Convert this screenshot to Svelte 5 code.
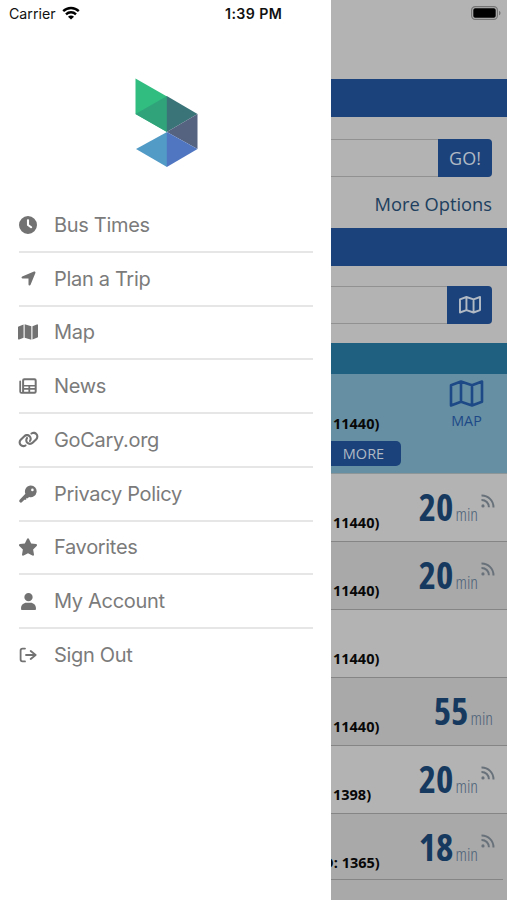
<script lang="ts">
	type MenuItem = { label: string; icon: string; box: string; width: number; height: number };

	const menu: MenuItem[] = [
		{
			label: 'Bus Times',
			box: '0 0 512 512',
			width: 18,
			height: 18,
			icon: 'M256 0a256 256 0 1 1 0 512A256 256 0 1 1 256 0zM226 120V256c0 8 4 17 12 23l96 66c14 9 30 5 38-8s5-29-8-38L286 243.2V120c0-16-13-28-30-28s-30 12-30 28z'
		},
		{
			label: 'Plan a Trip',
			box: '0 32 448 448',
			width: 15,
			height: 15,
			icon: 'M429.6 92.1c4.9-11.9 2.1-25.6-7-34.7s-22.8-11.9-34.7-7l-352 144c-14.2 5.8-22.2 20.8-19.3 35.8s16.1 25.8 31.4 25.8H224V432c0 15.3 10.8 28.4 25.8 31.4s30-5.1 35.8-19.3l144-352z'
		},
		{
			label: 'Map',
			box: '0 0 576 512',
			width: 20,
			height: 18,
			icon: 'M384 476.1L192 421.2V35.9L384 90.8V476.1zm32-1.2V88.4L543.1 37.5c15.8-6.3 32.9 5.3 32.9 22.3V394.6c0 9.8-6 18.6-15.1 22.3L416 474.8zM15.1 95.1L160 37.2V423.6L32.9 474.5C17.1 480.8 0 469.2 0 452.2V117.4c0-9.8 6-18.6 15.1-22.3z'
		},
		{
			label: 'News',
			box: '0 0 18 16',
			width: 18,
			height: 16,
			icon: 'M5.3 0.3h10.2a2.2 2.2 0 0 1 2.2 2.2v11a2.2 2.2 0 0 1-2.2 2.2h-13a2.2 2.2 0 0 1-2.2-2.2v-10a.9.9 0 0 1 1.8 0v10a.5.5 0 0 0 1 0v-11a2.2 2.2 0 0 1 2.2-2.2zM5.6 2.2a.5.5 0 0 0-.5.5v4.2h10.6V2.7a.5.5 0 0 0-.5-.5zM5.1 8.6v1.5h4.3V8.6zM11.2 8.6v1.5h4.5V8.6zM5.1 11.8v1.9h4.3v-1.9zM11.2 11.8v1.9h4a.5.5 0 0 0 .5-.5v-1.4z'
		},
		{
			label: 'GoCary.org',
			box: '0 0 640 512',
			width: 21,
			height: 17,
			icon: 'M579.8 267.7c56.5-56.5 56.5-148 0-204.5c-50-50-128.8-56.5-186.3-15.4l-1.6 1.1c-14.4 10.3-17.7 30.3-7.4 44.6s30.3 17.7 44.6 7.4l1.6-1.1c32.1-22.9 76-19.3 103.8 8.6c31.5 31.5 31.5 82.5 0 114L422.3 334.8c-31.5 31.5-82.5 31.5-114 0c-27.9-27.9-31.5-71.8-8.6-103.8l1.1-1.6c10.3-14.4 6.9-34.4-7.4-44.6s-34.4-6.9-44.6 7.4l-1.1 1.6C206.5 251.2 213 330 263 380c56.5 56.5 148 56.5 204.5 0L579.8 267.7zM60.2 244.3c-56.5 56.5-56.5 148 0 204.5c50 50 128.8 56.5 186.3 15.4l1.6-1.1c14.4-10.3 17.7-30.3 7.4-44.6s-30.3-17.7-44.6-7.4l-1.6 1.1c-32.1 22.9-76 19.3-103.8-8.6C74 372 74 321 105.5 289.5L217.7 177.2c31.5-31.5 82.5-31.5 114 0c27.9 27.9 31.5 71.8 8.6 103.9l-1.1 1.6c-10.3 14.4-6.9 34.4 7.4 44.6s34.4 6.9 44.6-7.4l1.1-1.6C433.5 260.8 427 182 377 132c-56.5-56.5-148-56.5-204.5 0L60.2 244.3z'
		},
		{
			label: 'Privacy Policy',
			box: '0 0 18 18',
			width: 18,
			height: 18,
			icon: 'M11.8.6a5.8 5.8 0 1 1-1.8 11.3L8.8 13.2H7.2v1.6H5.4L3.1 17.1a1.6 1.6 0 0 1-2.4 0c-.6-.7-.6-1.7 0-2.4l5.7-6A5.8 5.8 0 0 1 11.8.6zM13.4 3.6a1.3 1.3 0 1 0 0 2.6 1.3 1.3 0 1 0 0-2.6z'
		},
		{
			label: 'Favorites',
			box: '24 0 528 512',
			width: 18,
			height: 18,
			icon: 'M316.9 18C311.6 7 300.4 0 288.1 0s-23.4 7-28.8 18L195 150.3 51.4 171.5c-12 1.8-22 10.2-25.7 21.7s-.7 24.2 7.9 32.7L137.8 329 113.2 474.7c-2 12 3 24.2 12.9 31.3s23 8 33.8 2.3l128.3-68.5 128.3 68.5c10.8 5.7 23.9 4.9 33.8-2.3s14.9-19.3 12.9-31.3L438.5 329 542.7 225.9c8.6-8.5 11.7-21.2 7.9-32.7s-13.7-19.9-25.7-21.7L381.2 150.3 316.9 18z'
		},
		{
			label: 'My Account',
			box: '0 0 448 512',
			width: 15,
			height: 17,
			icon: 'M224 250A125 125 0 1 0 224 0a125 125 0 1 0 0 250zm-60 45C74 295 0 365 0 455v27C0 499 13 512 30 512H418c17 0 30-13 30-30v-27C448 365 374 295 284 295z'
		},
		{
			label: 'Sign Out',
			box: '0 0 18 16',
			width: 18,
			height: 16,
			icon: 'M6 .7a.9.9 0 0 1 0 1.8H3.7a1.2 1.2 0 0 0-1.2 1.2v8.6a1.2 1.2 0 0 0 1.2 1.2H6a.9.9 0 0 1 0 1.8H3.5A2.8 2.8 0 0 1 .7 12.5v-9A2.8 2.8 0 0 1 3.5.7zM12.3 3.3l4.9 4a.9.9 0 0 1 0 1.4l-4.9 4a.9.9 0 0 1-1.2-1.4L14 8.9H7a.9.9 0 0 1 0-1.8h7l-2.9-2.4a.9.9 0 0 1 1.2-1.4z'
		}
	];

	const arrivals = [
		{ stop: '11440)', min: '20', live: true },
		{ stop: '11440)', min: '20', live: true },
		{ stop: '11440)', min: '', live: false },
		{ stop: '11440)', min: '55', live: false },
		{ stop: '1398)', min: '20', live: true },
		{ stop: 'D: 1365)', min: '18', live: true, cut: true }
	];
</script>

{#snippet mapIcon()}
	<svg class="map-icon" viewBox="0 0 34 27">
		<path d="M1.5 5.3 11.5 1.5 22.5 5.3 32.5 1.5V21.7L22.5 25.5 11.5 21.7 1.5 25.5ZM11.5 1.5V21.7M22.5 5.3V25.5" />
	</svg>
{/snippet}

<div class="screen">
	<aside>
		<svg class="logo" width="64" height="90" viewBox="0 0 64 90">
			<path fill="#32bd80" d="M.5 .5 32 18.5 32 54 .5 36Z" />
			<path fill="#30a37b" d="M.5 36 32 18V54Z" />
			<path fill="#3a7478" d="M31.8 18 62.5 36 31.8 54Z" />
			<path fill="#556381" d="M62.5 36V71L31.8 54Z" />
			<path fill="#529bc6" d="M32 54V89L1 71Z" />
			<path fill="#5076c2" d="M31.8 54 62.5 71 31.8 89Z" />
		</svg>
		<ul>
			{#each menu as item}
				<li>
					<span class="icon">
						<svg width={item.width} height={item.height} viewBox={item.box}>
							<path fill-rule="evenodd" d={item.icon} />
						</svg>
					</span>
					<span class="label">{item.label}</span>
				</li>
			{/each}
		</ul>
	</aside>

	<main>
		<div class="bar"></div>
		<section class="search">
			<div class="field">
				<div class="input"></div>
				<div class="btn go">GO!</div>
			</div>
			<div class="more-options">More Options</div>
		</section>
		<div class="bar"></div>
		<section class="locate">
			<div class="field">
				<div class="input"></div>
				<div class="btn pick">{@render mapIcon()}</div>
			</div>
		</section>
		<div class="route"></div>
		<section class="current">
			<div class="left">
				<div class="stop">11440)</div>
				<div class="more">MORE</div>
			</div>
			<div class="map">
				{@render mapIcon()}
				<span>MAP</span>
			</div>
		</section>
		<div class="rows">
			{#each arrivals as a}
				<div class="row">
					<div class="stop" class:cut={a.cut}>{a.stop}</div>
					{#if a.min}
						<div class="time" class:is-live={a.live}>
							<span class="num">{a.min}</span>
							<span class="unit">min</span>
							{#if a.live}
								<svg class="live" width="14" height="14" viewBox="0 0 14 14">
									<circle cx="2" cy="11.9" r="1.6" />
									<path d="M.5 5.9a7.2 7.2 0 0 1 7.4 7.4M.5 1.4a11.8 11.8 0 0 1 12 12" />
								</svg>
							{/if}
						</div>
					{/if}
				</div>
			{/each}
		</div>
	</main>

	<header>
		<span class="carrier">Carrier</span>
		<svg class="wifi" width="18" height="14" viewBox="0 0 18 14">
			<path d="M1.2 5.1a11.2 11.2 0 0 1 15.6 0M4 8.3a7.2 7.2 0 0 1 10 0" />
			<path class="dot" d="M9 13.6 6 10.7a4.2 4.2 0 0 1 6 0z" />
		</svg>
		<span class="clock">1:39 PM</span>
		<svg class="battery" width="30" height="14" viewBox="0 0 30 14">
			<rect class="shell" x=".6" y=".6" width="25.8" height="12.8" rx="3.6" />
			<rect x="2.3" y="2.3" width="22.4" height="9.4" rx="1.8" />
			<path class="tip" d="M28 4.7c2 .8 2 3.8 0 4.6z" />
		</svg>
	</header>
</div>

<style>
	:global(body) {
		margin: 0;
		background: #fff;
	}
	.screen {
		position: relative;
		display: grid;
		grid-template-columns: 331px 176px;
		width: 507px;
		height: 900px;
		overflow: hidden;
		font-family: 'Open Sans', 'Noto Sans', sans-serif;
	}
	.screen * {
		box-sizing: border-box;
	}
	header {
		position: absolute;
		top: 0;
		left: 0;
		width: 507px;
		height: 27px;
		padding: 0 6px 0 9px;
		display: flex;
		align-items: center;
		font-family: Inter, sans-serif;
		color: #111;
	}
	.carrier {
		width: 53px;
		font-size: 14.2px;
	}
	.wifi {
		margin-top: -2px;
		fill: none;
		stroke: #000;
		stroke-width: 2.4;
	}
	.dot {
		fill: #000;
		stroke: none;
	}
	.clock {
		margin-left: 145px;
		font-size: 14.2px;
		font-weight: 600;
		letter-spacing: 0.4px;
		white-space: nowrap;
	}
	.battery {
		margin-left: auto;
		margin-top: -1px;
	}
	.shell {
		fill: none;
		stroke: #747474;
		stroke-width: 1.2;
	}
	.tip {
		fill: #747474;
	}

	aside {
		background: #fff;
		padding: 78px 18px 0 19px;
	}
	.logo {
		display: block;
		margin: 0 0 31px 116px;
	}
	ul {
		list-style: none;
		margin: 0;
		padding: 0;
	}
	li {
		display: flex;
		align-items: center;
		height: 53.75px;
		border-bottom: 2px solid #e6e6e6;
		font: 20px Inter, sans-serif;
		letter-spacing: -0.32px;
		color: #7b7b7b;
	}
	li:last-child {
		border-color: transparent;
	}
	.icon {
		display: flex;
		justify-content: center;
		width: 18px;
		margin-right: 17px;
		fill: #727272;
	}
	.icon svg {
		flex: none;
	}

	main {
		display: flex;
		flex-direction: column;
		padding-top: 79px;
		background: #b3b3b3;
		overflow: hidden;
	}
	main > * {
		flex: none;
	}
	.bar {
		height: 38px;
		background: #1b427a;
	}
	.search {
		height: 111px;
		padding: 22px 15px 0 0;
	}
	.locate {
		height: 77px;
		padding: 20px 15px 0 0;
	}
	.field {
		display: flex;
		height: 38px;
	}
	.input {
		flex: 1;
		border-top: 1px solid #919191;
		border-bottom: 1px solid #919191;
	}
	.btn {
		display: flex;
		align-items: center;
		justify-content: center;
		background: #1b427a;
		border-radius: 0 4px 4px 0;
		color: #b0b9c4;
		font-size: 18px;
	}
	.go {
		width: 54px;
	}
	.pick {
		width: 45px;
	}
	.more-options {
		margin-top: 14px;
		text-align: right;
		font-size: 18.3px;
		line-height: 26px;
		color: #203f5e;
		white-space: nowrap;
	}
	.map-icon {
		fill: none;
		stroke: currentColor;
		stroke-width: 3;
		stroke-linejoin: round;
	}
	.pick .map-icon {
		width: 22px;
		height: 17.5px;
	}
	.route {
		height: 31px;
		background: #1f5f80;
	}
	.current {
		display: flex;
		justify-content: space-between;
		height: 100px;
		background: #668fa3;
		border-bottom: 1px solid #8c9598;
	}
	.left {
		padding-top: 40px;
	}
	.stop {
		padding-left: 2px;
		font-size: 14.5px;
		font-weight: 700;
		line-height: 20px;
		color: #080808;
		white-space: nowrap;
	}
	.more {
		width: 70px;
		height: 25px;
		margin-top: 7px;
		padding-right: 5px;
		border-radius: 0 5px 5px 0;
		background: #1b427a;
		color: #b0b9c4;
		font-size: 14.5px;
		line-height: 25px;
		text-align: center;
	}
	.map {
		display: flex;
		flex-direction: column;
		align-items: center;
		width: 35px;
		margin-right: 23px;
		padding-top: 6px;
		color: #1d4987;
		font-size: 14.3px;
		line-height: 20px;
	}
	.map .map-icon {
		width: 35px;
		height: 27px;
		margin-bottom: 4px;
		stroke-width: 2.6;
	}
	.rows {
		flex: 1;
		background: #a9a9a9;
	}
	.row {
		display: flex;
		justify-content: space-between;
		height: 68px;
		padding-right: 14px;
		border-bottom: 1.5px solid #858585;
		background: #a9a9a9;
	}
	.row:nth-child(odd) {
		background: #b3b3b3;
	}
	.row:last-child {
		height: 66px;
		margin-right: 4px;
		padding-right: 10px;
	}
	.row .stop {
		padding-top: 39px;
	}
	.cut {
		margin-left: -10px;
	}
	.time {
		display: flex;
		align-items: baseline;
		height: 50px;
		padding-top: 8px;
		font-stretch: 75%;
		line-height: 50px;
		color: #163a5f;
	}
	.time.is-live {
		margin-right: -2px;
	}
	.num {
		margin-right: 2px;
		font-size: 37px;
		font-weight: 700;
	}
	.unit {
		font-size: 18px;
		font-weight: 350;
		color: #4c6178;
	}
	.live {
		align-self: flex-start;
		margin: 12px 0 0 3px;
	}
	.live circle {
		fill: #68717a;
	}
	.live path {
		fill: none;
		stroke: #68717a;
		stroke-width: 2;
	}
</style>
